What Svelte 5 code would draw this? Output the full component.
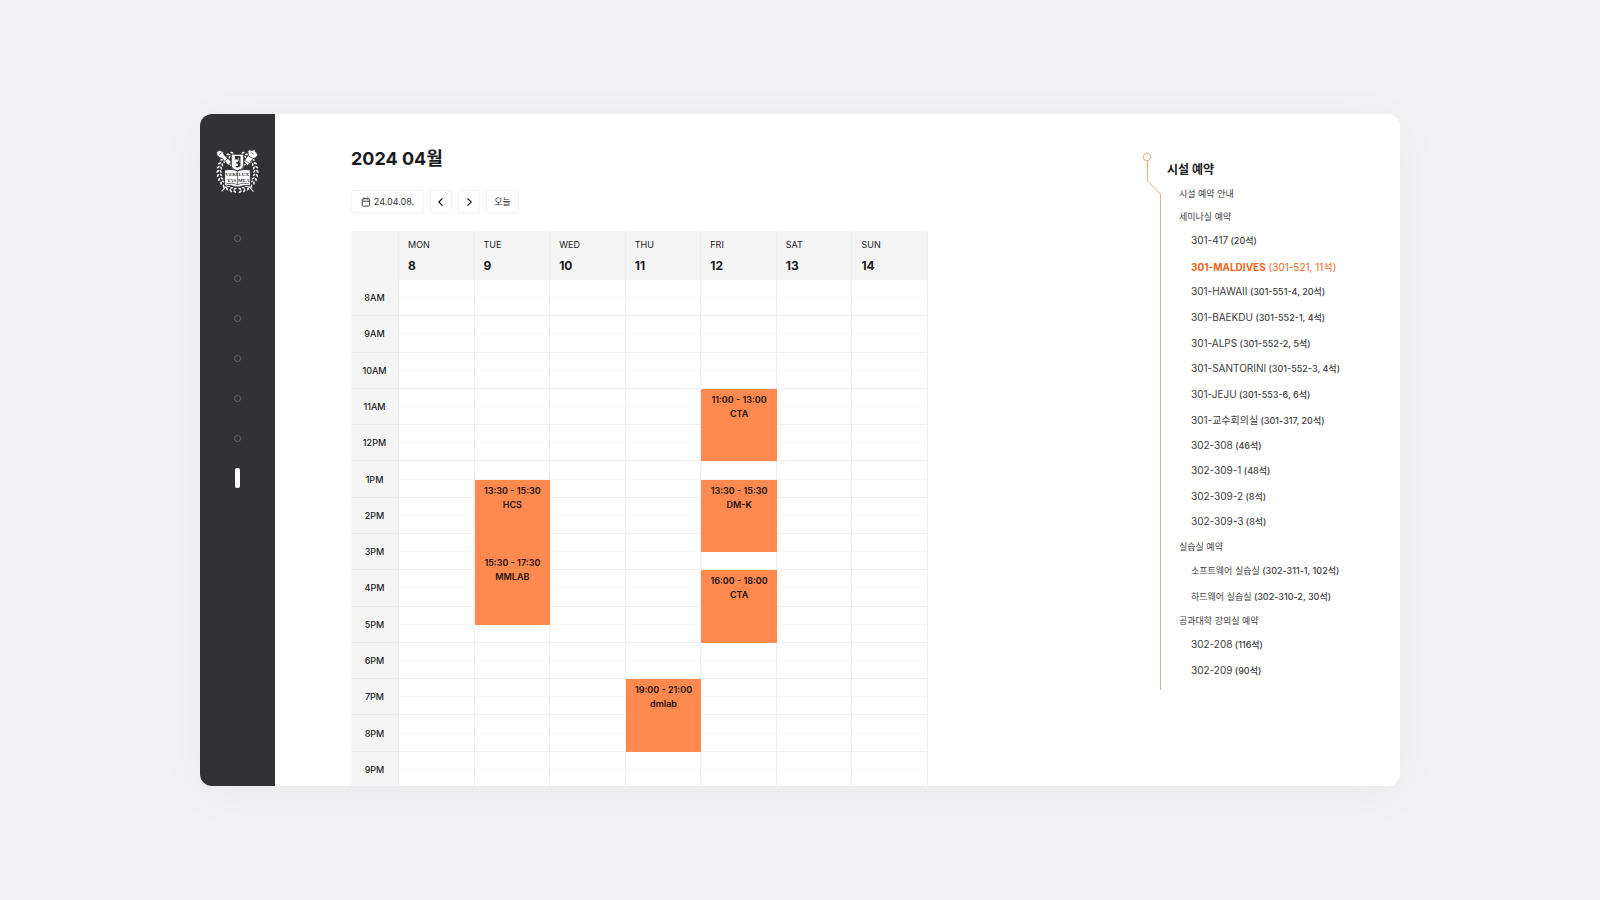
<script>
  const days = [
    ['MON', 8], ['TUE', 9], ['WED', 10], ['THU', 11], ['FRI', 12], ['SAT', 13], ['SUN', 14]
  ];
  const hours = ['8AM', '9AM', '10AM', '11AM', '12PM', '1PM', '2PM', '3PM', '4PM', '5PM', '6PM', '7PM', '8PM', '9PM'];
  // slot: index of the half-hour row where the booking begins
  const bookings = [
    { day: 1, slot: 11, time: '13:30 - 15:30', name: 'HCS' },
    { day: 1, slot: 15, time: '15:30 - 17:30', name: 'MMLAB' },
    { day: 3, slot: 22, time: '19:00 - 21:00', name: 'dmlab' },
    { day: 4, slot: 6, time: '11:00 - 13:00', name: 'CTA' },
    { day: 4, slot: 11, time: '13:30 - 15:30', name: 'DM-K' },
    { day: 4, slot: 16, time: '16:00 - 18:00', name: 'CTA' }
  ];
  const span = 4;
  const rows = Array.from({ length: hours.length * 2 }, (_, slot) => ({
    slot,
    hour: slot % 2 === 0 ? hours[slot / 2] : null,
    cells: days
      .map((_, day) => ({ day, booking: bookings.find((b) => b.day === day && b.slot === slot) }))
      .filter(({ day, booking }) => booking || !bookings.some((b) => b.day === day && slot > b.slot && slot < b.slot + span))
  }));

  const menu = [
    { title: '시설 예약 안내' },
    { title: '세미나실 예약' },
    { room: '301-417', info: '(20석)' },
    { room: '301-MALDIVES', info: '(301-521, 11석)', active: true },
    { room: '301-HAWAII', info: '(301-551-4, 20석)' },
    { room: '301-BAEKDU', info: '(301-552-1, 4석)' },
    { room: '301-ALPS', info: '(301-552-2, 5석)' },
    { room: '301-SANTORINI', info: '(301-552-3, 4석)' },
    { room: '301-JEJU', info: '(301-553-6, 6석)' },
    { room: '301-교수회의실', info: '(301-317, 20석)' },
    { room: '302-308', info: '(46석)' },
    { room: '302-309-1', info: '(48석)' },
    { room: '302-309-2', info: '(8석)' },
    { room: '302-309-3', info: '(8석)' },
    { title: '실습실 예약' },
    { room: '소프트웨어 실습실', info: '(302-311-1, 102석)', lab: true },
    { room: '하드웨어 실습실', info: '(302-310-2, 30석)', lab: true },
    { title: '공과대학 강의실 예약' },
    { room: '302-208', info: '(116석)' },
    { room: '302-209', info: '(90석)' }
  ];

  // laurel leaves, in pairs on both sides of the ring
  const leaves = Array.from({ length: 14 }, (_, i) => 8 + i * 12).flatMap((a) => [a, -a]);
</script>

<div class="page">
  <div class="window">
    <div class="sidebar">
      <a class="home" href="#home" aria-label="Home">
        <svg class="emblem" viewBox="0 0 130 132" aria-hidden="true">
          <g stroke="#fff" stroke-width="3.5" stroke-linecap="round">
            <path d="M20 20 L112 127" />
            <path d="M110 20 L18 127" />
          </g>
          {#each leaves as a}
            <g transform="rotate({180 + a} 65 69)">
              <ellipse cx="65" cy="9" rx="5.5" ry="2.6" transform="rotate({a > 0 ? 35 : -35} 65 9)" fill="#fff" />
              <ellipse cx="65" cy="18" rx="5" ry="2.4" transform="rotate({a > 0 ? -35 : 35} 65 18)" fill="#fff" />
            </g>
          {/each}
          <g fill="#fff" stroke="#323135" stroke-width="2.5">
            <path d="M2 15 Q0 6 8 5 Q15 1 22 10 L26 19 L47 38 L37 49 L19 28 Q8 28 2 15Z" />
            <path d="M83 38 L98 18 L96 6 Q101 -1 107 4 L119 1 Q115 7 124 12 Q129 20 120 25 L112 29 L96 50Z" />
          </g>
          <path d="M10 17 L17 10 M28 35 L36 27 M97 20 L112 28 M88 34 L101 43 M105 10 L114 15" stroke="#323135" stroke-width="2" />
          <path d="M46 15 H84 V49 Q82 61 65 66 Q48 61 46 49Z" fill="#fff" stroke="#323135" stroke-width="3" />
          <path d="M57 21 H74 V51 Q69 57 60 55 V51 H66 V44 H61 V39 H66 V31 H57Z" fill="#323135" />
          <path d="M68 26 V34 L73 38" fill="none" stroke="#fff" stroke-width="2" />
          <path d="M26 63 Q47 58 65 65 Q83 58 104 63 V111 Q85 107 72 114 H58 Q45 107 26 111Z" fill="#fff" stroke="#323135" stroke-width="3" />
          <path d="M65 66 V107 M30 105 Q49 100 65 107 Q81 100 100 105" fill="none" stroke="#323135" stroke-width="2" />
          <g class="motto" text-anchor="middle">
            <text x="47" y="82">VERI</text><text x="84" y="82">LUX</text>
            <text x="47" y="98">TAS</text><text x="84" y="98">MEA</text>
          </g>
        </svg>
      </a>
      <nav class="dots" aria-label="Sections">
        {#each [1, 2, 3, 4, 5, 6, 7] as n}
          <a class="dot" class:current={n === 7} href="#section-{n}" aria-label="Section {n}"><span></span></a>
        {/each}
      </nav>
    </div>

    <main>
      <section class="calendar">
        <h1>2024 04월</h1>
        <div class="toolbar">
          <button class="date" type="button">
            <svg width="10" height="10" viewBox="0 0 10 10" fill="none" stroke="#444" aria-hidden="true">
              <rect x="1.2" y="1.7" width="7.4" height="7.4" rx="1" />
              <path d="M1.2 4.2 H8.6 M3 .4 V2.6 M6.8 .4 V2.6" />
            </svg>
            24.04.08.
          </button>
          <button class="arrow" type="button" aria-label="Previous week">
            <svg width="10" height="10" viewBox="0 0 10 10" fill="none" stroke="#111" stroke-width="1.2" aria-hidden="true"><path d="M6.5 1.3 L2.8 5 L6.5 8.7" /></svg>
          </button>
          <button class="arrow" type="button" aria-label="Next week">
            <svg width="10" height="10" viewBox="0 0 10 10" fill="none" stroke="#111" stroke-width="1.2" aria-hidden="true"><path d="M3.5 1.3 L7.2 5 L3.5 8.7" /></svg>
          </button>
          <button class="today" type="button">오늘</button>
        </div>
        <table>
          <thead>
            <tr>
              <td class="corner"></td>
              {#each days as [name, date]}
                <th class="day" scope="col">{name}<strong>{date}</strong></th>
              {/each}
            </tr>
          </thead>
          <tbody>
            {#each rows as { slot, hour, cells }}
              <tr>
                {#if hour}
                  <th class="hour" scope="row" rowspan="2" style="grid-area: {slot + 2} / 1 / span 2">{hour}</th>
                {/if}
                {#each cells as { day, booking }}
                  {#if booking}
                    <td class="booking" rowspan={span} style="grid-area: {slot + 2} / {day + 2} / span {span}">
                      {booking.time}<br />{booking.name}
                    </td>
                  {:else}
                    <td class="slot" class:half={slot % 2 === 0} style="grid-area: {slot + 2} / {day + 2}"></td>
                  {/if}
                {/each}
              </tr>
            {/each}
          </tbody>
        </table>
      </section>

      <aside>
        <div class="rail" aria-hidden="true">
          <svg width="20" height="44" viewBox="0 0 20 44" fill="none" stroke="#f5a77f">
            <circle cx="5" cy="5" r="3.7" />
            <path d="M5.5 8.7 V29 L18.5 42 V44" />
          </svg>
          <div class="line"></div>
        </div>
        <nav class="facilities" aria-label="시설 예약">
          <h2>시설 예약</h2>
          <ul>
            {#each menu as item}
              {#if item.title}
                <li class="group"><a href="#group">{item.title}</a></li>
              {:else}
                <li class="room" class:lab={item.lab} class:active={item.active}><a href="#room">{item.room}<small>{' ' + item.info}</small></a></li>
              {/if}
            {/each}
          </ul>
        </nav>
      </aside>
    </main>
  </div>
</div>

<style>
  :global(body) {
    margin: 0;
    background: #f2f2f4;
  }
  .page {
    display: grid;
    place-items: center;
    min-height: 100vh;
    font-family: Inter, 'Noto Sans CJK KR', sans-serif;
    color: #1a1a1c;
  }
  .window {
    display: flex;
    width: 75vw;
    height: calc(100vh - 228px);
    overflow: hidden;
    border-radius: 12px;
    background: #fff;
    box-shadow: 0 8px 50px rgba(30, 30, 50, 0.04);
  }
  a {
    color: inherit;
    text-decoration: none;
  }

  .sidebar {
    display: flex;
    flex: 0 0 75px;
    flex-direction: column;
    align-items: center;
    gap: 25px;
    padding-top: 35px;
    background: #323135;
  }
  .home {
    display: flex;
  }
  .emblem {
    width: 43px;
    height: 44px;
  }
  .motto {
    font: 700 15px 'Liberation Serif', serif;
    fill: #323135;
  }
  .dots {
    display: flex;
    flex-direction: column;
  }
  .dot {
    display: grid;
    place-items: center;
    width: 40px;
    height: 40px;
  }
  .dot span {
    width: 5px;
    height: 5px;
    border: 1px solid #69686c;
    border-radius: 50%;
  }
  .dot.current span {
    height: 20px;
    width: 5px;
    border: 0;
    border-radius: 2px;
    background: #fff;
  }

  main {
    display: grid;
    flex: 1;
    grid-template-columns: minmax(0, 577fr) 472fr;
    align-items: start;
    padding: 33px 0 0 76px;
  }
  h1 {
    margin: 0 0 19px;
    font-size: 18px;
    font-weight: 700;
    line-height: 24px;
  }
  .toolbar {
    display: flex;
    gap: 6px;
    margin-bottom: 18px;
  }
  button {
    display: flex;
    align-items: center;
    justify-content: center;
    gap: 3px;
    box-sizing: border-box;
    height: 23px;
    padding: 0;
    border: 1px solid #f3f3f3;
    border-radius: 2px;
    background: #fff;
    color: #333;
    font-family: inherit;
    font-size: 9px;
    white-space: nowrap;
  }
  .date {
    width: 73px;
  }
  .arrow {
    width: 22px;
  }
  .today {
    width: 33px;
  }

  table {
    display: grid;
    grid-template-columns: 48px repeat(7, minmax(0, 1fr));
    grid-template-rows: 49px repeat(28, minmax(0, 1fr));
    height: 557px;
  }
  thead,
  tbody,
  tr {
    display: contents;
  }
  th,
  td {
    display: block;
    box-sizing: border-box;
    padding: 0;
    border: 0 solid #efefef;
    border-right-width: 1px;
    font-size: 9px;
  }
  .corner,
  .day,
  .hour {
    background: #f5f5f5;
  }
  .day {
    padding: 7px 9px 0;
    border-color: #eee;
    font-weight: 400;
    line-height: 14px;
    text-align: left;
  }
  .day strong {
    display: block;
    margin-top: 6px;
    font-size: 12px;
    font-weight: 700;
    line-height: 16px;
  }
  .hour {
    display: grid;
    place-items: center;
    border-color: #ebebeb;
    border-bottom-width: 1px;
    font-weight: 500;
  }
  .slot {
    border-bottom-width: 1px;
  }
  .slot.half {
    border-bottom-color: #f7f7f7;
  }
  .booking {
    padding-top: 4px;
    border: 0;
    background: #ff894f;
    color: #1c1210;
    font-weight: 600;
    line-height: 14px;
    text-align: center;
  }

  aside {
    display: flex;
    justify-self: end;
    width: 258px;
    margin-top: 5px;
  }
  .rail {
    display: flex;
    flex: 0 0 25px;
    flex-direction: column;
  }
  .line {
    flex: 1;
    margin-left: 18px;
    border-left: 1px solid #f5a77f;
  }
  .facilities {
    padding: 10px 0 7px;
  }
  h2 {
    margin: 0 0 4px;
    font-size: 12px;
    font-weight: 700;
    line-height: 16px;
  }
  ul {
    display: flex;
    flex-direction: column;
    height: 501px;
    margin: 0;
    padding: 0 0 0 12px;
    list-style: none;
  }
  li {
    display: flex;
    align-items: center;
    color: #3c3c3e;
    font-size: 10px;
    white-space: nowrap;
  }
  .group {
    flex: 0 0 23px;
    font-size: 9px;
  }
  .room {
    flex: 1;
    padding-left: 12px;
  }
  .lab {
    font-size: 9px;
  }
  small {
    font-size: 9px;
    font-weight: 500;
  }
  .active {
    color: #f0661e;
    font-weight: 700;
  }
  .active small {
    font-size: 10px;
    font-weight: 400;
  }
</style>
